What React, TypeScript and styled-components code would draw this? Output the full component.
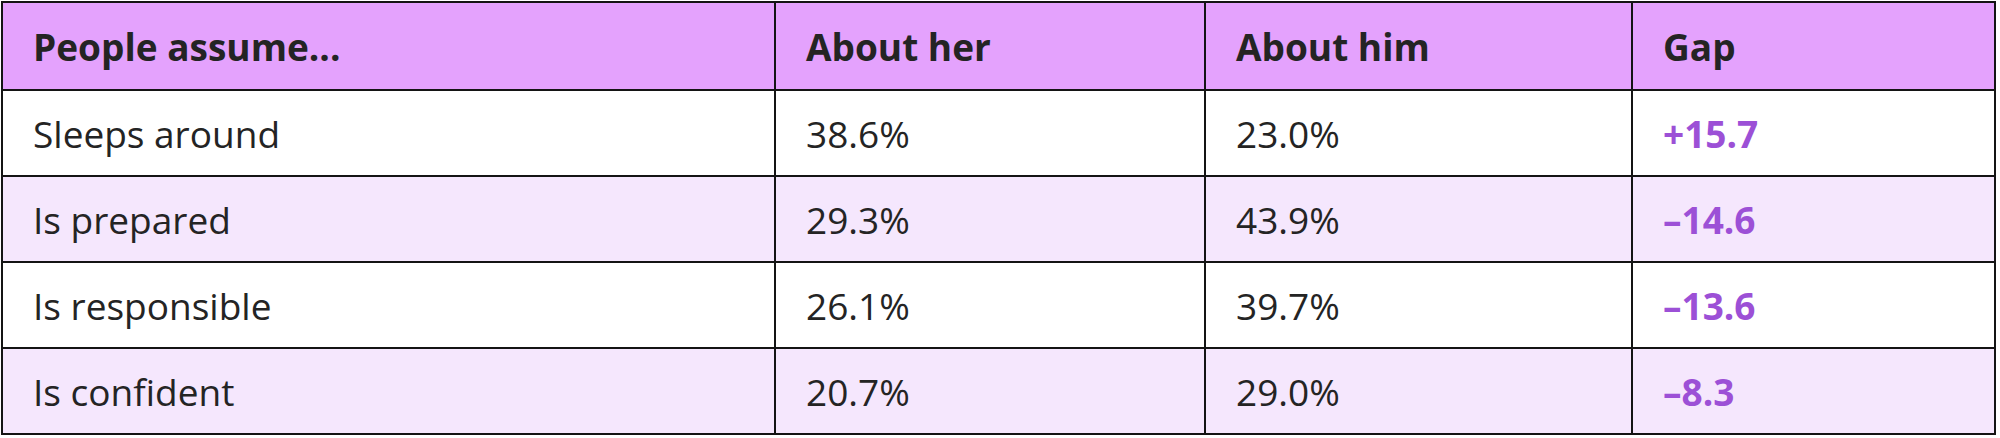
import React from "react";
import styled, { createGlobalStyle } from "styled-components";

const GlobalStyle = createGlobalStyle`
  html, body {
    margin: 0;
    padding: 0;
    background: #ffffff;
  }
  body {
    font-family: "Open Sans", "Noto Sans", "Liberation Sans", sans-serif;
  }
`;

const Page = styled.div`
  padding: 1px 0 0 1px;
`;

const Table = styled.div`
  display: grid;
  grid-template-columns: 773px 430px 427px 363px;
  grid-template-rows: 88px repeat(4, 86px);
  width: 1995px;
  border-left: 2px solid #141414;
  border-top: 2px solid #141414;
  box-sizing: border-box;
`;

const Cell = styled.div<{ $head?: boolean; $alt?: boolean; $gap?: boolean }>`
  display: flex;
  align-items: center;
  box-sizing: border-box;
  padding-left: 30px;
  border-right: 2px solid #141414;
  border-bottom: 2px solid #141414;
  background: ${(p) => (p.$head ? "#e4a2fd" : p.$alt ? "#f5e7fd" : "#ffffff")};
  color: ${(p) => (p.$gap ? "#9c50d6" : "#242424")};
  font-size: 37px;
  font-weight: ${(p) => (p.$head || p.$gap ? 700 : 400)};
  white-space: nowrap;
`;

const rows = [
  ["Sleeps around", "38.6%", "23.0%", "+15.7"],
  ["Is prepared", "29.3%", "43.9%", "–14.6"],
  ["Is responsible", "26.1%", "39.7%", "–13.6"],
  ["Is confident", "20.7%", "29.0%", "–8.3"],
];

const head = ["People assume...", "About her", "About him", "Gap"];

export default function App() {
  return (
    <>
      <GlobalStyle />
      <Page>
        <Table>
          {head.map((h) => (
            <Cell key={h} $head>
              {h}
            </Cell>
          ))}
          {rows.map((r, i) =>
            r.map((v, j) => (
              <Cell key={`${i}-${j}`} $alt={i % 2 === 1} $gap={j === 3}>
                {v}
              </Cell>
            ))
          )}
        </Table>
      </Page>
    </>
  );
}
